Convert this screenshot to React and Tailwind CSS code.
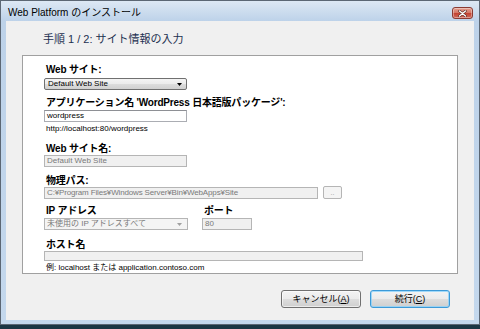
import React from "react";

const FONT = "font-['Liberation_Sans','Noto_Sans_CJK_JP',sans-serif]";

function Label({ children, className = "" }) {
  return (
    <div className={`h-[12px] pl-[2px] text-[10px] font-bold leading-[12px] tracking-[-0.2px] text-black ${className}`}>
      {children}
    </div>
  );
}

function Arrow({ color = "#000" }) {
  return (
    <svg width="5" height="3" viewBox="0 0 5 3" className="shrink-0">
      <path d="M0 0h5L2.5 3z" fill={color} />
    </svg>
  );
}

function CloseButton() {
  return (
    <div className="flex h-[12px] w-[21px] items-center justify-center rounded-[3px] border border-[#8a3b33] bg-[linear-gradient(to_bottom,#e3a091,#d47362_50%,#c2402f_51%,#d0695a)] shadow-[inset_0_0_0_1px_rgba(255,255,255,0.35)]">
      <svg width="9" height="7" viewBox="0 0 9 7">
        <path d="M1.5 1l6 5M7.5 1l-6 5" stroke="#5a2a24" strokeWidth="2.6" strokeLinecap="round" />
        <path d="M1.5 1l6 5M7.5 1l-6 5" stroke="#fff" strokeWidth="1.4" strokeLinecap="round" />
      </svg>
    </div>
  );
}

export default function App() {
  return (
    <div className={`h-[329px] w-[480px] overflow-hidden bg-[#1b3644] ${FONT}`}>
      <div className="flex h-[325px] flex-col border border-[#5c6774] bg-[linear-gradient(to_bottom,#dde8f4,#bdd2e9_20px,#c4d8ed)]">
        {/* Title bar */}
        <div className="flex h-[20px] items-start justify-between pl-[7px] pr-[6px]">
          <span className="mt-[6px] text-[10px] leading-[12px] text-black">Web Platform のインストール</span>
          <div className="mt-[6px]">
            <CloseButton />
          </div>
        </div>

        {/* Client */}
        <div className="mx-[5px] mb-[4px] flex flex-1 flex-col bg-[#f0f0f0]">
          <div className="ml-[37px] mt-[10px] h-[16px] text-[11px] leading-[16px] text-[#1e3050]">
            手順 1 / 2: サイト情報の入力
          </div>

          {/* Panel */}
          <div className="ml-[16px] mt-[8px] flex h-[219px] w-[436px] flex-col overflow-hidden border border-[#a0a0a0] bg-white pl-[21px] pt-[8px]">
            <Label>Web サイト:</Label>
            <div className="mt-[2px] flex h-[12px] w-[143px] items-center justify-between rounded-[2px] border border-[#707070] bg-[linear-gradient(to_bottom,#f4f4f4,#ebebeb_50%,#dddddd_51%,#d0d0d0)] pl-[3px] pr-[4px]">
              <span className="text-[8px] leading-[10px] text-black">Default Web Site</span>
              <Arrow />
            </div>

            <Label className="mt-[7px]">アプリケーション名 'WordPress 日本語版パッケージ':</Label>
            <div className="mt-[1px] flex h-[12px] w-[143px] items-center border border-[#abadb3] border-t-[#8e9095] bg-white pl-[2px]">
              <span className="text-[8px] leading-[10px] text-black">wordpress</span>
            </div>
            <div className="mt-[1px] h-[12px] pl-[2px] text-[8px] leading-[12px] text-black">
              http://localhost:80/wordpress
            </div>

            <Label className="mt-[8px]">Web サイト名:</Label>
            <div className="flex h-[12px] w-[143px] items-center border border-[#b5b5b5] bg-[#f0f0f0] pl-[2px]">
              <span className="text-[8px] leading-[10px] text-[#7a7a7a]">Default Web Site</span>
            </div>

            <Label className="mt-[8px]">物理パス:</Label>
            <div className="mt-[-1px] flex items-center gap-[5px]">
              <div className="flex h-[12px] w-[274px] items-center border border-[#b5b5b5] bg-[#f0f0f0] pl-[2px]">
                <span className="text-[8px] leading-[10px] tracking-[-0.15px] text-[#7a7a7a]">
                  C:¥Program Files¥Windows Server¥Bin¥WebApps¥Site
                </span>
              </div>
              <div className="flex h-[13px] w-[19px] items-center justify-center rounded-[2px] border border-[#b5b5b5] bg-[#f4f4f4] text-[7px] leading-[8px] text-[#9a9a9a]">
                ..
              </div>
            </div>

            <div className="mt-[6px] flex gap-[14px]">
              <div className="flex flex-col">
                <Label>IP アドレス</Label>
                <div className="mt-[1px] flex h-[12px] w-[144px] items-center justify-between border border-[#b5b5b5] bg-[#f4f4f4] pl-[2px] pr-[5px]">
                  <span className="text-[8px] leading-[10px] text-[#7a7a7a]">未使用の IP アドレスすべて</span>
                  <Arrow color="#a0a0a0" />
                </div>
              </div>
              <div className="flex flex-col">
                <Label>ポート</Label>
                <div className="mt-[1px] flex h-[12px] w-[50px] items-center border border-[#b5b5b5] bg-[#f0f0f0] pl-[2px]">
                  <span className="text-[8px] leading-[10px] text-[#7a7a7a]">80</span>
                </div>
              </div>
            </div>

            <Label className="mt-[9px]">ホスト名</Label>
            <div className="h-[12px] w-[319px] border border-[#b5b5b5] bg-[#f0f0f0]" />
            <div className="mt-[2px] h-[10px] pl-[2px] text-[8px] leading-[10px] text-black">
              例: localhost または application.contoso.com
            </div>
          </div>

          {/* Buttons */}
          <div className="mr-[24px] mt-[16px] flex justify-end gap-[9px]">
            <button className="flex h-[18px] w-[80px] items-center justify-center rounded-[3px] border border-[#707070] bg-[linear-gradient(to_bottom,#f3f3f3,#ebebeb_50%,#dddddd_51%,#cfcfcf)] text-[9px] leading-[10px] text-black shadow-[inset_0_0_0_1px_rgba(255,255,255,0.6)]">
              キャンセル(<span className="underline">A</span>)
            </button>
            <button className="flex h-[18px] w-[80px] items-center justify-center rounded-[3px] border border-[#3c9ad8] bg-[linear-gradient(to_bottom,#f3f3f3,#ebebeb_50%,#dddddd_51%,#cfcfcf)] text-[9px] leading-[10px] text-black shadow-[inset_0_0_0_1px_rgba(140,210,250,0.8)]">
              続行(<span className="underline">C</span>)
            </button>
          </div>
        </div>
      </div>
    </div>
  );
}
